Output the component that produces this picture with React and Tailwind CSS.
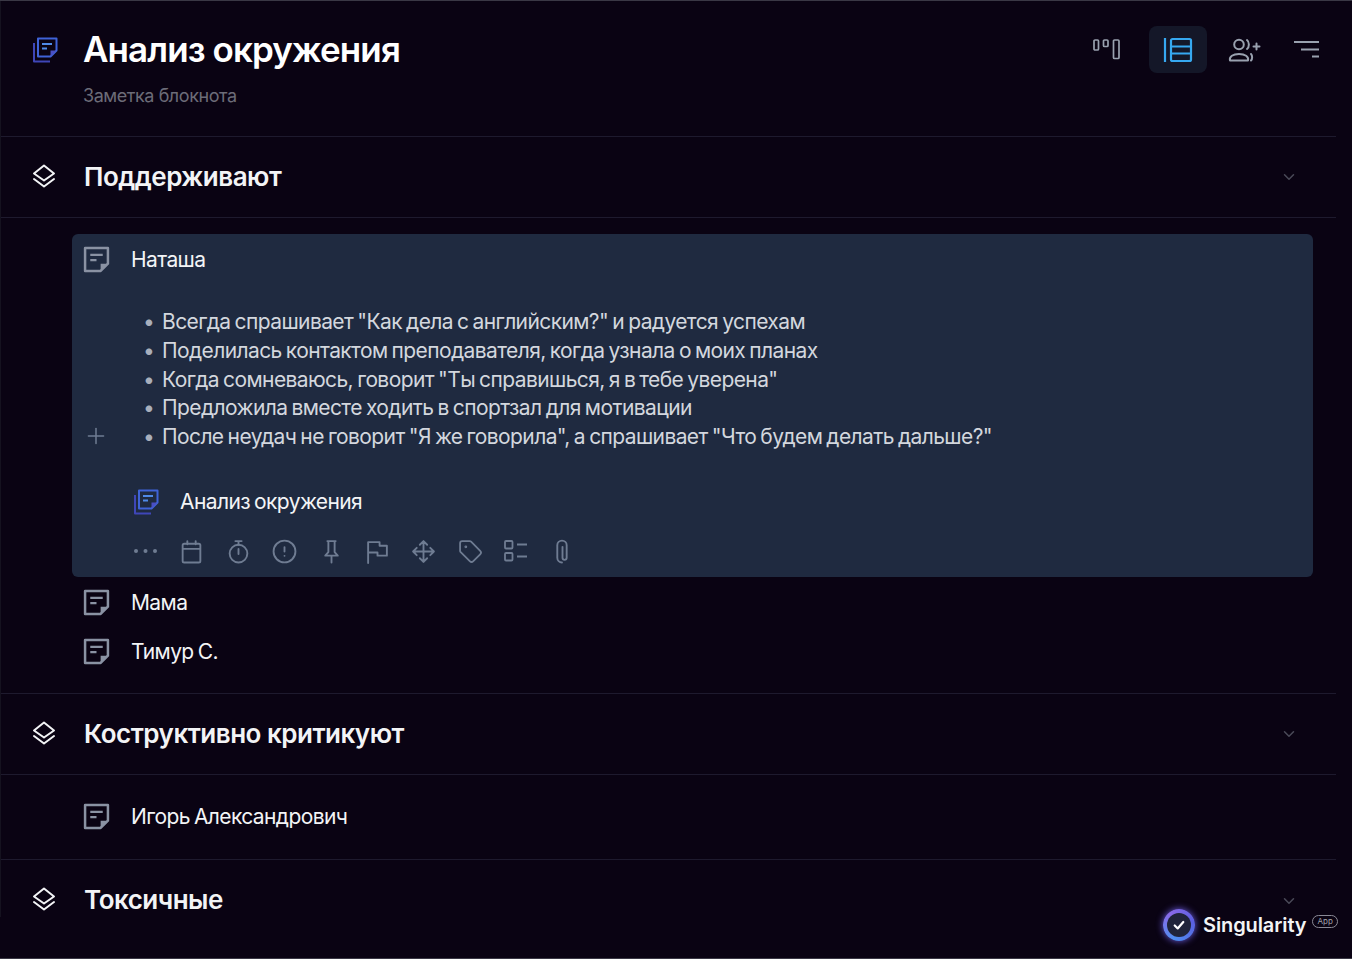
import React from "react";
import { ChevronDown, Plus, CircleAlert, Tag } from "lucide-react";

function NoteIcon({ className }) {
  return (
    <svg viewBox="0 0 26 26" fill="none" className={className}>
      <path d="M2 2h22v15l-7 7H2z" stroke="currentColor" strokeWidth="2.4" strokeLinejoin="round" />
      <path d="M24 17h-7v7z" fill="currentColor" />
      <path d="M7 8.5h12M7 13.5h6" stroke="currentColor" strokeWidth="2.2" />
    </svg>
  );
}

function NotebookIcon({ className }) {
  return (
    <svg viewBox="0 0 26 26" fill="none" className={className}>
      <path d="M6 1.5h18.5v12l-6 6H6z" stroke="#3f63d8" strokeWidth="2" strokeLinejoin="round" />
      <path d="M24.5 13.5h-6v6z" fill="#4a4fc4" />
      <path d="M10 7h10M10 11.5h5" stroke="#4f8ae8" strokeWidth="2" />
      <path d="M2 6v18.5h16" stroke="#3f46b8" strokeWidth="2" strokeLinejoin="round" />
    </svg>
  );
}

function LayersIcon() {
  return (
    <svg viewBox="0 0 24 24" fill="none" className="w-6 h-6 mb-[3px] text-gray-100" stroke="currentColor" strokeWidth="2" strokeLinejoin="round" strokeLinecap="round">
      <path d="M12 1.5 2 9.5l10 7 10-7z" />
      <path d="M2 15 12 22.5 22 15" />
    </svg>
  );
}

function BoardIcon() {
  return (
    <svg viewBox="0 0 28 22" fill="none" className="w-7 h-[22px] mb-[2px] text-gray-400" stroke="currentColor" strokeWidth="1.7">
      <rect x="1" y="2" width="4.5" height="10" rx="1" />
      <rect x="10.5" y="2" width="4.5" height="6.5" rx="1" />
      <rect x="20.5" y="2" width="5.5" height="18.5" rx="1" />
    </svg>
  );
}

function ListIcon() {
  return (
    <svg viewBox="0 0 30 26" fill="none" className="w-[30px] h-[26px] text-[#36a8f0]" stroke="currentColor" strokeWidth="2.2">
      <path d="M2 1v24" />
      <rect x="8" y="2" width="20" height="22" rx="1.5" />
      <path d="M8 9.5h20M8 16.5h20" />
    </svg>
  );
}

function PeopleIcon() {
  return (
    <svg viewBox="0 0 34 24" fill="none" className="w-[34px] h-6 text-gray-400" stroke="currentColor" strokeWidth="2" strokeLinecap="round">
      <circle cx="11" cy="6.5" r="4.8" />
      <path d="M2 22.5c-1-4 3-6.5 9-6.5s10 2.5 9 6.5z" strokeLinejoin="round" />
      <path d="M19 2c2.5 2 2.5 7 0 9M23 16c1.5 1.5 1.5 5 0 6.5" />
      <path d="M28.5 5.5v6M25.5 8.5h6" />
    </svg>
  );
}

function FilterIcon() {
  return (
    <svg viewBox="0 0 26 18" fill="none" className="w-[26px] h-[18px] mb-[2px] text-gray-400" stroke="currentColor" strokeWidth="2">
      <path d="M0 2h25M7 9.5h18M18 16.5h7" />
    </svg>
  );
}

function TodoIcon() {
  return (
    <svg viewBox="0 0 24 22" fill="none" className="w-6 h-[22px]" stroke="currentColor" strokeWidth="1.8">
      <rect x="1" y="1" width="7.5" height="7.5" rx="1" />
      <rect x="1" y="13" width="7.5" height="7.5" rx="1" />
      <path d="M13 4.5h10M13 16.5h10" />
    </svg>
  );
}

function ToolIcon({ d, circle }) {
  return (
    <svg viewBox="0 0 24 24" fill="none" className="w-[25px] h-[25px]" stroke="currentColor" strokeWidth="1.8" strokeLinejoin="round" strokeLinecap="round">
      {circle && <circle cx="12" cy="14" r="8.5" />}
      <path d={d} />
    </svg>
  );
}

function Section({ title, last }) {
  return (
    <div className={last ? "flex items-center h-[81px] pl-[32px] pr-[38px]" : "flex items-center h-[81px] pl-[32px] pr-[38px] border-b border-[#1e1a2e]"}>
      <LayersIcon />
      <h2 className="ml-[28px] mb-[2px] flex-1 text-[26px] font-semibold tracking-[-0.5px] text-gray-100">{title}</h2>
      <ChevronDown className="w-[18px] h-[18px] text-[#4a4a58]" strokeWidth={2} />
    </div>
  );
}

function Row({ name }) {
  return (
    <div className="flex items-center h-[49px] pl-[83px]">
      <NoteIcon className="w-[27px] h-[27px] text-[#8a92a3]" />
      <span className="ml-[21px] text-[21px] tracking-[-0.6px] [word-spacing:-1.2px] text-gray-100">{name}</span>
    </div>
  );
}

const notes = [
  'Всегда спрашивает "Как дела с английским?" и радуется успехам',
  "Поделилась контактом преподавателя, когда узнала о моих планах",
  'Когда сомневаюсь, говорит "Ты справишься, я в тебе уверена"',
  "Предложила вместе ходить в спортзал для мотивации",
  'После неудач не говорит "Я же говорила", а спрашивает "Что будем делать дальше?"',
];

function Toolbar() {
  return (
    <div className="flex items-center gap-[21.4px] mt-[19px] pl-[61px] text-[#6f7c92]">
      <svg viewBox="0 0 25 6" className="w-[25px] h-[6px]" fill="currentColor">
        <circle cx="3" cy="3" r="2" />
        <circle cx="12.5" cy="3" r="2" />
        <circle cx="22" cy="3" r="2" />
      </svg>
      <ToolIcon d="M3.5 6a1.5 1.5 0 0 1 1.5-1.5h14A1.5 1.5 0 0 1 20.5 6v15a1.5 1.5 0 0 1-1.5 1.5H5A1.5 1.5 0 0 1 3.5 21zM3.5 9.5h17M8 2v3M16 2v3" />
      <ToolIcon circle d="M9 2h6M12 2v3.5M12 9.5v5" />
      <CircleAlert className="w-[25px] h-[25px] scale-105" strokeWidth={1.7} />
      <ToolIcon d="M8 2h8M9 2v10.5L6 16h12l-3-3.5V2M12 16v6.5" />
      <ToolIcon d="M3 23V3h11v3.5h7v9.5h-9v-3H3" />
      <ToolIcon d="M12 2v20M2 12h20M8.5 5.5 12 2l3.5 3.5M8.5 18.5 12 22l3.5-3.5M5.5 8.5 2 12l3.500 3.500M18.500 8.500 22 12l-3.500 3.500" />
      <Tag className="w-[25px] h-[25px]" strokeWidth={1.7} />
      <TodoIcon />
      <ToolIcon d="M12 7.5V18a2 2 0 0 0 4 0V6a4.5 4.5 0 0 0-9 0v12a4.5 4.5 0 0 0 4.5 4.5" />
    </div>
  );
}

export default function App() {
  return (
    <div className="relative h-[959px] overflow-hidden bg-[#0a0313] border-t border-b border-[#3a3845] font-['Inter','Noto_Sans',sans-serif]">
      <div className="absolute left-0 top-0 w-px h-[916px] bg-[#15121f]" />
      <div className="w-[1336px]">
        {/* Header */}
        <div className="flex items-start h-[136px] pl-[32px] pr-[16px] border-b border-[#1e1a2e]">
          <NotebookIcon className="w-[26px] h-[26px] mt-[36px]" />
          <div className="ml-[25px] flex-1 pt-[26px]">
            <h1 className="text-[35px] leading-[44px] font-semibold tracking-[-0.9px] text-white">Анализ окружения</h1>
            <p className="mt-[13px] text-[18px] leading-[24px] tracking-[-0.44px] text-[#6c6c78]">Заметка блокнота</p>
          </div>
          <div className="flex items-center mt-[25px]">
            <BoardIcon />
            <div className="ml-[28px] flex items-center justify-center w-[58px] h-[47px] rounded-lg bg-[#141728]">
              <ListIcon />
            </div>
            <div className="ml-[21px]"><PeopleIcon /></div>
            <div className="ml-[32px]"><FilterIcon /></div>
          </div>
        </div>

        <Section title="Поддерживают" />

        <div className="pt-[16px] pb-[17px] border-b border-[#1e1a2e]">
          {/* Opened card */}
          <div className="relative ml-[72px] w-[1241px] h-[343px] rounded-md bg-[#1f2a40]">
            <div className="flex items-center h-[52px] pl-[11px]">
              <NoteIcon className="w-[27px] h-[27px] mb-[2px] text-[#8a92a3]" />
              <span className="ml-[21px] text-[21px] tracking-[-0.6px] text-gray-100">Наташа</span>
            </div>
            <ul className="mt-[22px] pl-[90px] text-[21px] leading-[28.8px] tracking-[-0.6px] [word-spacing:-1.2px] text-[#d3d7de] list-none">
              {notes.map((n) => (
                <li key={n} className="relative before:absolute before:left-[-19px] before:content-['•'] before:text-[#a8afbc]">
                  {n}
                </li>
              ))}
            </ul>
            <Plus className="absolute left-[11px] top-[189px] w-[26px] h-[26px] text-[#6f7c92]" strokeWidth={1.4} />
            <div className="flex items-center mt-[32px] pl-[61px] h-[36px]">
              <NotebookIcon className="w-[26px] h-[26px]" />
              <span className="ml-[21px] text-[21px] tracking-[-0.6px] [word-spacing:-1.2px] text-gray-100">Анализ окружения</span>
            </div>
            <Toolbar />
          </div>
          <div className="mt-px">
            <Row name="Мама" />
            <Row name="Тимур С." />
          </div>
        </div>

        <Section title="Коструктивно критикуют" />

        <div className="pt-[17px] pb-[18px] border-b border-[#1e1a2e]">
          <Row name="Игорь Александрович" />
        </div>

        <Section title="Токсичные" last />
      </div>

      {/* Watermark */}
      <div className="absolute left-[1163px] top-[908px] flex items-center">
        <div className="flex items-center justify-center w-[32px] h-[32px] rounded-full bg-[conic-gradient(from_200deg,#4f8ef0,#8a6ae8,#5a5fe0,#4f8ef0)] shadow-[0_0_7px_#6a5be0]">
          <div className="flex items-center justify-center w-[24px] h-[24px] rounded-full bg-[#20243a]">
            <svg viewBox="0 0 14 14" fill="none" className="w-[12px] h-[12px] text-white" stroke="currentColor" strokeWidth="2.6" strokeLinecap="round" strokeLinejoin="round">
              <path d="M2 7.5 5.5 11 12 3.5" />
            </svg>
          </div>
        </div>
        <span className="ml-[8px] text-[20px] font-semibold tracking-[-0.1px] text-gray-100">Singularity</span>
        <span className="ml-[6px] mb-[8px] px-[4px] rounded-full border border-[#8a8a96] text-[8px] leading-[11px] text-[#a0a0aa]">App</span>
      </div>
    </div>
  );
}
